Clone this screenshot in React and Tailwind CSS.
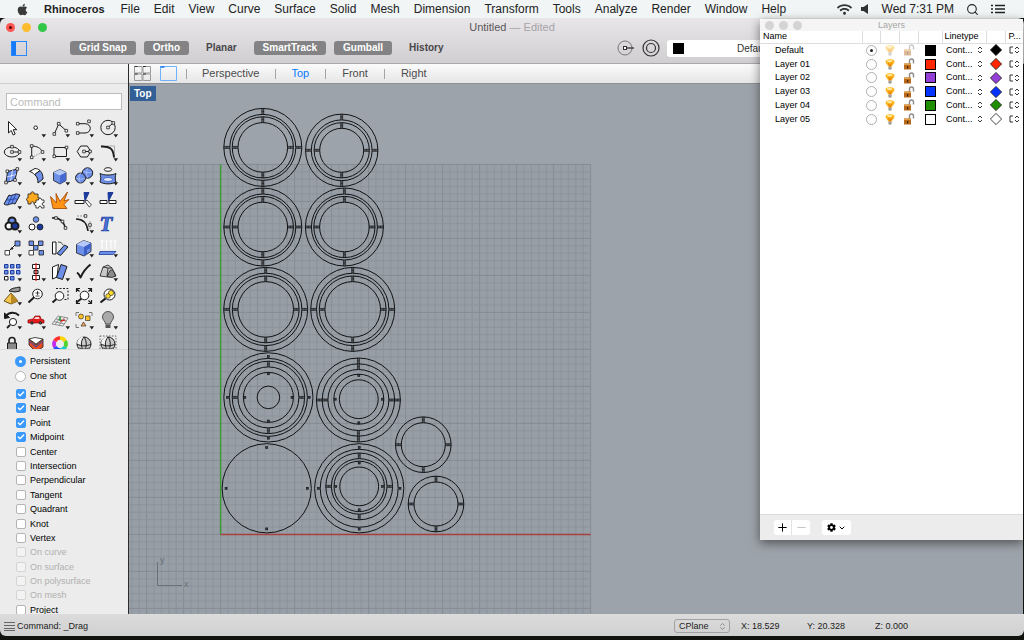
import { FaApple, FaWifi, FaCog } from 'react-icons/fa';
import { ChevronDown, ChevronsUpDown, Minus, Plus, Search, Check } from 'lucide-react';
import clsx from 'clsx';

const MENUS = ['File', 'Edit', 'View', 'Curve', 'Surface', 'Solid', 'Mesh', 'Dimension', 'Transform', 'Tools', 'Analyze', 'Render', 'Window', 'Help'];

const SNAPS = [
  { label: 'End', on: true },
  { label: 'Near', on: true },
  { label: 'Point', on: true },
  { label: 'Midpoint', on: true },
  { label: 'Center' },
  { label: 'Intersection' },
  { label: 'Perpendicular' },
  { label: 'Tangent' },
  { label: 'Quadrant' },
  { label: 'Knot' },
  { label: 'Vertex' },
  { label: 'On curve', disabled: true },
  { label: 'On surface', disabled: true },
  { label: 'On polysurface', disabled: true },
  { label: 'On mesh', disabled: true },
  { label: 'Project' },
];

const LAYERS = [
  { name: 'Default', color: '#000000', current: true },
  { name: 'Layer 01', color: '#ff2600' },
  { name: 'Layer 02', color: '#9440d8' },
  { name: 'Layer 03', color: '#0433ff' },
  { name: 'Layer 04', color: '#1f8f00' },
  { name: 'Layer 05', color: '#ffffff' },
];

/* ---------- tool palette ---------- */

const K = '#1c1c1c';
const B = '#6d8fe8';
const L = '#b5c8fa';
const N = '#1b3a9a';

// little square control point
const P = ({ x, y, f = '#fff' }) => <rect x={x - 1.3} y={y - 1.3} width="2.6" height="2.6" fill={f} stroke={K} strokeWidth=".8" />;
const Lens = ({ x = 13.5, y = 10, r = 4.8, f = '#fff' }) => (
  <>
    <path d={`M${x - r * 0.7} ${y + r * 0.7}L4.5 18.5`} strokeWidth="2" />
    <circle cx={x} cy={y} r={r} fill={f} />
  </>
);
const Sphere = () => (
  <>
    <circle cx="12" cy="12" r="7" fill="#c9c9c9" />
    <path d="M5.500 9.500C7 5 11 4.500 12 5c-2 3-2.500 5-2.500 8-2-.3-4-1-4.500-1.500z" fill="#f4f4f4" stroke="none" />
    <path d="M5 12c4 2.500 10 2.500 14 0M12 5c-3.500 4-3.500 10 0 14M12 5c3 4 3 10 0 14" />
    <path d="M7 15c4 2 7 2 10 0l-2 3.200H9z" fill="#555" stroke="none" />
  </>
);

const TOOLS = [
  ['Select', 0, <path d="M8.500 5.500v11.500l2.700-2.500 2 4.500 2-1-2-4.300h3.600z" fill="#fff" />],
  ['Point', 1, <circle cx="11.700" cy="11.700" r="1.800" fill="#fff" />],
  ['Polyline', 1, <><path d="M6.300 18L10.700 8l8 7" /><P x={6.3} y={18} /><P x={10.7} y={7.7} /><P x={18.3} y={14.7} /></>],
  ['Curve', 1, <><path d="M5.700 7.700H13c7 0 7 9.300 0 9.300H5.700" /><P x={5.7} y={7.7} /><P x={17} y={5.3} /><P x={5.7} y={17} /></>],
  ['Circle', 1, <><circle cx="12" cy="11.500" r="7.200" /><path d="M12 11.500l5-4.500" /><P x={12} y={11.5} /><P x={17.3} y={7} /></>],

  ['Ellipse', 1, <><ellipse cx="12" cy="12" rx="7.700" ry="5" /><path d="M12 12h8" /><P x={12} y={12} /><P x={19.5} y={12} /><P x={12} y={6.7} /></>],
  ['Arc', 1, <><path d="M7.700 17.500L18.700 12" stroke="#999" strokeDasharray="1.500 1" /><path d="M7.700 17V6c5 0 9 2 11 6" /><P x={7.7} y={6} /><P x={7.7} y={17.3} /><P x={18.5} y={12} /></>],
  ['Rectangle', 1, <><rect x="6" y="7.500" width="12.500" height="9" /><P x={6.3} y={16.3} /><P x={18.5} y={7.5} /></>],
  ['Polygon', 1, <><path d="M8.700 6h6.600l3.500 5.500-3.500 5.500H8.700L5.200 11.500z" /><path d="M12 11.500h6" /><P x={12} y={11.5} /><P x={18} y={11.5} /></>],
  ['Fillet', 1, <><path d="M11 6h7.500v7" stroke="#aaa" /><path d="M5 6.500c8-.5 12.500 1.500 13 11" strokeWidth="2" /></>],

  ['Surface', 1, <><path d="M7.500 7.500L17.500 5l-2.500 11-9 2.500z" fill={B} /><path d="M12.500 6l-2 11M6.700 13l9.500-2.500" stroke="#fff" strokeWidth=".7" /><P x={7.3} y={7.3} /><P x={17.3} y={5} /><P x={15} y={16} /><P x={6} y={18.5} /></>],
  ['Loft', 1, <><path d="M10.500 10.500l5.500-4c2.500 2.500 3 5 3 8.500l-5 4c0-4-1-6.500-3.500-8.500z" fill={B} /><path d="M5.500 7.500l5.500-3c2 0 3.500.8 5 2l-5.500 4C9 9 7.500 7.800 5.500 7.500z" fill="#fff" /></>],
  ['Box', 1, <><path d="M5.500 8.500l6.500-3 6 3v8l-6 3.500-6.500-3.500z" fill={B} strokeWidth=".8" /><path d="M5.500 8.500l6.500-3 6 3-6 3z" fill={L} stroke="none" /><path d="M12 11.500l6-3v8L12 20z" fill="#4668cf" stroke="none" /></>],
  ['Boolean union', 1, <><circle cx="15.500" cy="9" r="5.200" fill={B} /><circle cx="8.500" cy="14" r="5" fill={B} /><path d="M3.500 14c3 1.500 7 1.500 10 0M8.500 9c-2 3-2 7 0 10M11 7c3 2 6 2 9 1M16 4c-2 3-2 7 0 10" stroke="#dbe5ff" strokeWidth=".5" /></>],
  ['Pipe', 1, <><ellipse cx="12" cy="5.500" rx="3.700" ry="1.800" fill="#fff" /><path d="M4 9.500c4 2 12 2 16 0-1 3-1 6 0 8.500-4 2.500-12 2.500-16 0 1-3 1-5.500 0-8.500z" fill={B} /><ellipse cx="12" cy="15.500" rx="4.500" ry="2" fill="#dfe8ff" stroke={N} strokeWidth=".6" /></>],

  ['Mesh', 1, <><path d="M4 16l5-9c3 2 6-3 11 0l-5 9c-4-2-7 3-11 0z" fill={B} /><path d="M6.500 11.500c4 2 7-2.500 11 0M12.500 6.500l-4.500 10M16 5.500L11.500 16" stroke={N} strokeWidth=".8" /></>],
  ['Join', 0, <><path d="M4 6h3c-1-3 4-3 3 0h4v4c3-1 3 4 0 3v3h-4c1-3-4-3-3 0H4v-3c-2 0-2-3 0-3z" fill="#ffa91f" strokeWidth=".8" /><path d="M12 12h2.500c-.5-2.500 3.500-2.500 3 0H20v2.500c-2.500-.5-2.500 3.500 0 3V20h-2.500c.5-2.500-3.500-2.500-3 0H12v-2.500c-2.500.5-2.500-3.500 0-3z" fill="#fff" strokeWidth=".8" /></>],
  ['Explode', 0, <path d="M5 20.500L2.500 8.500l6 6.500-.5-9.500 4 8L19.500 4l-3.500 9 5-1.500-5 5 3 4z" fill="#ff9316" stroke="#9b4200" strokeWidth=".8" />],
  ['Trim', 0, <><path d="M12 4.500h5L13 13z" fill={N} stroke={N} /><path d="M3 12.500h9v3H3z" fill="#fff" /><path d="M13 13.500l2-1.500 4.500 5-2.200 2z" fill="#fff" strokeWidth=".8" /></>],
  ['Split', 0, <><path d="M12 4.500h5L12.500 13z" fill={N} stroke={N} /><path d="M4 12.500h7v3H4zM13 12.500h7v3h-7z" fill="#fff" /></>],

  ['Group', 1, <><circle cx="12" cy="9" r="3.600" fill={B} strokeWidth="2" /><circle cx="9" cy="14" r="3.500" fill="#fff" strokeWidth="2" /><circle cx="15" cy="14" r="3.500" fill={N} strokeWidth="2" /></>],
  ['Ungroup', 0, <><circle cx="12" cy="7.500" r="2.800" fill={B} strokeWidth=".8" /><circle cx="8" cy="15" r="3" fill="#fff" /><circle cx="16" cy="15" r="3" fill={N} strokeWidth=".8" /></>],
  ['Edit points', 0, <><path d="M4 6c7-1 12 3 13.500 11" strokeWidth="1.600" /><P x={8} y={6} /><P x={14.5} y={9.5} /><P x={17.5} y={16} /></>],
  ['Control points', 1, <><path d="M4 7c7 0 11 4 12 12" strokeWidth="1.600" /><path d="M5 4h8M18 9v8" stroke="#999" strokeDasharray="2 1" /><P x={13.5} y={4} /><P x={18} y={13} /></>],
  ['Text', 0, <text x="3.500" y="19" fontFamily="Liberation Serif, serif" fontSize="21" fontWeight="bold" fontStyle="italic" fill="#4b72dc" stroke={N} strokeWidth=".7">T</text>],

  ['Move', 1, <><path d="M8 16l7-7" /><path d="M15 5h5v5h-5z" fill={B} strokeWidth=".8" /><path d="M5 14.500h4.500V19H5z" fill="#fff" strokeWidth=".8" /><circle cx="12" cy="12.500" r=".8" fill={K} /></>],
  ['Copy', 0, <><path d="M5 5h4.500v4.500H5zM14.500 5H19v4.500h-4.500zM9.500 9.500H14V14H9.500zM15 14.500h4.500V19H15z" fill={B} strokeWidth=".8" /><path d="M5 14.500h4.500V19H5z" fill="#fff" strokeWidth=".8" /></>],
  ['Rotate', 0, <><path d="M4.500 6H8v12H4.500z" fill="#fff" /><path d="M9 17.500l7.500-8.500 3.500 2-7.500 8.500z" fill={B} /><path d="M10 6c3 0 4 1 5 3" strokeWidth=".8" /></>],
  ['Chamfer', 1, <><path d="M4.500 8.500l7-4 7.500 2.500v8.500l-7 4.500-7.500-3z" fill={B} strokeWidth=".8" /><path d="M4.500 8.500l7-4L19 7l-7 4z" fill={L} stroke="none" /><path d="M12 11l7-4v5l-4 1.500V18l-3 2z" fill="#3d5fc6" stroke="none" /></>],
  ['Extrude', 1, <><path d="M6 13V5M10.500 13V5M15 13V5M19 13V5M5 6l1-2 1 2M9.500 6l1-2 1 2M14 6l1-2 1 2M18 6l1-2 1 2" stroke="#fff" /><path d="M4 15.500h16l-3 3H3z" fill={B} stroke={N} strokeWidth=".8" /></>],

  ['Array', 1, <><path d="M4.500 4.500H8V8H4.500zM10.500 4.500H14V8h-3.500zM16.500 4.500H20V8h-3.500zM4.500 10.500H8V14H4.500zM10.500 10.500H14V14h-3.500zM16.500 10.500H20V14h-3.500zM10.500 16.500H14V20h-3.500z" fill={B} stroke={N} /><path d="M4.500 16.500H8V20H4.500z" fill="#fff" /></>],
  ['Align', 1, <><path d="M8.500 4.500h7v4h-7zM8.500 15.500h7v4h-7z" fill="#fff" /><path d="M10 10.500h4v3h-4z" fill="#bbb" /><path d="M12 3v18" stroke="#e01b1b" strokeWidth="1.200" /></>],
  ['Flow', 1, <><path d="M4.500 7l6-2.500L9 17l-4.500 2z" fill="#fff" /><path d="M13 4.500l6 2-4.500 13-6-2z" fill={B} /></>],
  ['Check', 1, <path d="M5 12.500c1.500 1 2.500 2.500 3.500 5C11 12 14 8 18.500 4.500" strokeWidth="2" />],
  ['Solids', 1, <><path d="M4 16l3-9 5-2 4 3 4 8-8 1z" fill="#c9c9c9" strokeWidth=".8" /><path d="M7 7l5 1-1 8M12 8l4 0" strokeWidth=".8" /><path d="M11 16.500l3-6c2-1.500 4 .5 5.500 5.500l-3.500 1.500z" fill="#8c8c8c" strokeWidth=".8" /></>],

  ['Cap', 1, <><path d="M4 17l7-8 7 8-7 3z" fill="#f4c64f" stroke="#6b5414" /><path d="M11 9v11l7-3z" fill="#b98a24" stroke="none" /><path d="M9 7c2-3 6-3 11-4v4l-5 1z" fill="#999" /></>],
  ['Zoom', 0, <><Lens /><path d="M11.500 9h4M13.500 7v4M11.500 12h4" strokeWidth=".8" /></>],
  ['Zoom window', 0, <><path d="M8 4.500h12v11h-4" strokeDasharray="2 1.500" /><Lens x={11.5} y={12} r={4.3} /></>],
  ['Zoom extents', 0, <><Lens x={12.5} y={11.5} r={4.3} /><path d="M4.500 8V4.500H8M16 4.500h3.500V8M19.500 16v3.500H16M4.500 16v3.500H8M4.500 4.500l3 3M19.500 4.500l-3 3M19.500 19.500l-3-3" strokeWidth="1.200" /></>],
  ['Zoom selected', 0, <><Lens x={13.5} y={10.5} r={5.5} /><circle cx="15" cy="9" r="2.600" fill="#ffde2b" strokeWidth=".6" /><circle cx="12" cy="12" r="2.300" fill="#ffde2b" strokeWidth=".6" /></>],

  ['Undo view', 1, <><path d="M6 8c3-4 9-4.500 13-.5" strokeWidth="1.800" /><path d="M4.500 5v5.500l5-1z" fill={K} /><circle cx="13" cy="14" r="3.600" fill="#fff" /><path d="M10 17l-3 3" strokeWidth="1.800" /></>],
  ['Named view', 1, <><path d="M4 12l5-1 2-3h5l1 3 3 1v3H4z" fill="#e31d1d" stroke="#8d0b0b" strokeWidth=".7" /><path d="M10 11l1.500-2H15l.5 2z" fill="#f7d6d6" stroke="none" /><circle cx="8" cy="15" r="1.300" fill="#555" strokeWidth=".7" /><circle cx="16.500" cy="15" r="1.300" fill="#555" strokeWidth=".7" /></>],
  ['CPlane', 1, <><path d="M4 16l6-8 10 2-5 8zM6 13.500l10.500 2.500M8 11l10.500 2M13 8.500l-6 8M16.500 9.500L11 17.500" stroke="#777" strokeWidth=".8" /><path d="M12 13l5-1" stroke="#d22" strokeWidth="1.500" /><path d="M12 13V9" stroke="#1a9b3a" strokeWidth="1.500" /></>],
  ['Selection filter', 1, <><path d="M4 8V4.500h3M17 4.500h3V8M4 16v3.500h3" stroke="#777" /><circle cx="9" cy="8.500" r="2.500" fill="#ffc12b" strokeWidth=".6" /><path d="M13.500 8H18v4.500h-4.500z" fill="#ffc12b" strokeWidth=".6" /><path d="M9 18l2.500-4 2.500 4z" fill="#f7a35c" strokeWidth=".6" /></>],
  ['Lights', 1, <><path d="M9.500 16c0-3-3-3.500-3-7a5.500 5.500 0 0111 0c0 3.500-3 4-3 7z" fill="#a9a9a9" stroke="#555" /><path d="M9.500 16.500h5V20h-5z" fill="#555" stroke="none" /></>],

  ['Lock', 0, <><path d="M9 11V8.500a3 3 0 016 0V11" strokeWidth="1.600" /><path d="M7.500 11h9v8h-9z" fill="#8a8a8a" /></>],
  ['Layers', 0, <><path d="M5 7l7 6 7-6v8l-7 5-7-7z" fill="#e94b23" strokeWidth=".8" /><path d="M5 7l6-1.500L19 7l-7 5z" fill="#fff" strokeWidth=".8" /><path d="M5 9l7 6 7-6" stroke="#2348b8" /></>],
  ['Color', 0, (
    <g strokeWidth="3.600">
      <path d="M12 6a6 6 0 015.200 3" stroke="#ffd400" /><path d="M17.200 9a6 6 0 010 6" stroke="#4fd22a" /><path d="M17.200 15a6 6 0 01-5.200 3" stroke="#12c9c9" />
      <path d="M12 18a6 6 0 01-5.200-3" stroke="#234bff" /><path d="M6.800 15a6 6 0 010-6" stroke="#c427ee" /><path d="M6.800 9A6 6 0 0112 6" stroke="#ff2e2e" />
    </g>
  )],
  ['Shade', 0, <Sphere />],
  ['Shade selected', 0, <><path d="M4 4h16v16H4z" stroke="#666" strokeDasharray="1.500 1.500" /><Sphere /></>],
];

function Tool({ label, menu, children }) {
  return (
    <button type="button" aria-label={label} className="size-6">
      <svg viewBox="0 0 24 24" className="size-6" fill="none" stroke={K} strokeWidth="1" strokeLinejoin="round">
        {children}
        {menu === 1 && <path d="M17.500 18.300h4.600l-2.300 3.200z" fill="#222" stroke="none" />}
      </svg>
    </button>
  );
}

/* ---------- drawing ---------- */

// rings: radii; bars: [outer, inner] tabs at the quadrants; dots: radii of the pin holes
const PARTS = [
  { x: 262.8, y: 147.4, rings: [39, 33, 30.6, 24.8], bars: [[39, 33], [30.6, 24.8]] },
  { x: 341.7, y: 150.3, rings: [36.2, 30.4, 27.6, 22], bars: [[36.2, 30.4], [27.6, 22]] },
  { x: 262.8, y: 227, rings: [39, 33, 30.6, 24.8], bars: [[39, 33], [30.6, 24.8]] },
  { x: 344.4, y: 227, rings: [39, 33, 30.6, 24.8], bars: [[39, 33], [30.6, 24.8]] },
  { x: 265.7, y: 309.4, rings: [42, 36.2, 33.4, 27.8], bars: [[42, 36.2], [33.4, 27.8]] },
  { x: 352.7, y: 309.4, rings: [42, 36.2, 33.4, 27.8], bars: [[42, 36.2], [33.4, 27.8]] },
  { x: 268.4, y: 397.4, rings: [44.6, 39, 36.2, 30.5, 25, 11.3], bars: [[36.2, 30.5]], dots: [40.8, 23.6] },
  { x: 358.4, y: 400, rings: [42, 36.2, 30.5], bars: [[42, 36.2], [36.2, 30.5]] },
  { x: 358.8, y: 399.2, rings: [25, 19.4], dots: [23.6] },
  { x: 266.7, y: 488.3, rings: [44.6], dots: [40.6] },
  { x: 359.2, y: 488.3, rings: [44.6, 39], dots: [40.8] },
  { x: 359.2, y: 486.4, rings: [33.4, 27.8, 25.2, 19.4], bars: [[33.4, 27.8]], dots: [23.4] },
  { x: 423.3, y: 444.7, rings: [27.8, 22], bars: [[27.8, 22]] },
  { x: 436, y: 504, rings: [27.8, 22], bars: [[27.8, 22]] },
];

const STEP = 7.4;
const X0 = 220.6;
const Y0 = 534.4;
const COLS = Array.from({ length: 63 }, (_, i) => i - 12);
const ROWS = Array.from({ length: 62 }, (_, i) => i - 50);

function Part({ x, y, rings, bars = [], dots = [] }) {
  return (
    <g transform={`translate(${x} ${y})`}>
      {rings.map((r) => <circle key={r} r={r} />)}
      {[0, 90, 180, 270].map((a) => (
        <g key={a} transform={`rotate(${a})`}>
          {bars.map(([o, i]) => (
            <g key={o}>
              <rect x={i} y="-1.1" width={o - i} height="2.2" fill="#1b1d20" fillOpacity=".5" stroke="none" />
              <path d={`M${i} -1H${o}M${i} 1H${o}M${(i + o) / 2} -1V1`} strokeWidth=".6" />
            </g>
          ))}
          {dots.map((r) => <rect key={r} x={r - 1} y="-1" width="2" height="2" fill="#3b3e42" strokeWidth=".6" />)}
        </g>
      ))}
    </g>
  );
}

function Drawing() {
  return (
    <svg className="block size-full" role="img" aria-label="Top view drawing">
      <g transform="translate(-129 -84)" fill="none">
        <rect x="129" y="164.400" width="461.600" height="800" fill="#979ea6" />
        {COLS.map((i) => (
          <path key={i} d={`M${X0 + i * STEP} 164.400V900`} stroke={i % 5 ? '#8b929b' : '#838a93'} strokeWidth=".9" />
        ))}
        {ROWS.map((i) => (
          <path key={i} d={`M129 ${Y0 + i * STEP}H590.600`} stroke={i % 5 ? '#8b929b' : '#838a93'} strokeWidth=".9" />
        ))}
        <path d={`M${X0} 164.400V${Y0}`} stroke="#3f9a35" strokeWidth="1.500" />
        <path d={`M${X0} ${Y0}H590.600`} stroke="#a8403f" strokeWidth="1.500" />
        <g stroke="#101214" strokeWidth="1">
          {PARTS.map((p, i) => <Part key={i} {...p} />)}
        </g>
        <path d="M157.500 562v23.500H182" stroke="#6b7076" />
        <g fill="#686d73" className="text-[9px]">
          <text x="160" y="563">y</text>
          <text x="184" y="587">x</text>
        </g>
      </g>
    </svg>
  );
}

/* ---------- chrome ---------- */

function MenuBar() {
  return (
    <header className="flex h-[18px] shrink-0 items-center bg-[#f1f5f6] pr-[18px] pl-4 text-[12px] text-[#222]">
      <FaApple size={13} className="text-[#3a3a3a]" />
      <button type="button" className="ml-[15px] text-[11px] font-bold">Rhinoceros</button>
      <nav className="ml-4 flex gap-3.5">
        {MENUS.map((m) => <button type="button" key={m}>{m}</button>)}
      </nav>
      <div className="ml-auto flex items-center">
        <FaWifi size={15} className="text-[#333]" />
        <svg viewBox="0 0 10 12" className="ml-2 h-3 w-2.5" fill="#333"><path d="M1 4h2.500L8 1v10L3.500 8H1z" /></svg>
        <span className="ml-3 whitespace-nowrap">Wed 7:31 PM</span>
        <Search size={13} strokeWidth={2} className="ml-3" />
        <svg viewBox="0 0 15 10" className="ml-3 h-2.5 w-[15px]" stroke="#222" strokeWidth="1.500"><path d="M0 1.500h2M4 1.500h10M0 5h2M4 5h10M0 8.500h2M4 8.500h10" /></svg>
      </div>
    </header>
  );
}

function Toggle({ children, on }) {
  return (
    <button type="button" aria-pressed={!!on} className={clsx('h-3.5 rounded-[3px] px-[9px] text-[10px] leading-[14px] font-bold', on ? 'bg-[#838284] text-white' : 'text-[#48464a]')}>
      {children}
    </button>
  );
}

function Toolbar() {
  return (
    <div className="h-[46px] shrink-0 rounded-t-md border-b border-[#aaa8aa] bg-linear-to-b from-[#e9e6e9] to-[#d0ced0]">
      <div className="grid h-[19px] grid-cols-3 items-center px-1.5">
        <div className="flex gap-[7px]">
          <span className="grid size-[9px] place-items-center rounded-full bg-[#fc5753]"><i className="size-[3px] rounded-full bg-[#5a0000]" /></span>
          <span className="size-[9px] rounded-full bg-[#fdbc2e]" />
          <span className="size-[9px] rounded-full bg-[#33c748]" />
        </div>
        <h1 className="text-center text-[11px] whitespace-nowrap text-[#59575a]">Untitled <span className="text-[#a5a3a6]">— Edited</span></h1>
      </div>
      <div className="flex h-[22px] items-center">
        <button type="button" aria-label="Toggle sidebar" className="ml-[11px] flex h-[15px] w-4 border border-[#2688fb]"><span className="h-full w-1 bg-[#1679f5]" /></button>
        <div className="ml-[43px] flex items-center gap-2">
          <Toggle on>Grid Snap</Toggle>
          <Toggle on>Ortho</Toggle>
          <Toggle>Planar</Toggle>
          <Toggle on>SmartTrack</Toggle>
          <Toggle on>Gumball</Toggle>
          <Toggle>History</Toggle>
        </div>
        <div className="mr-[184px] ml-auto flex items-center gap-[7px]">
          <svg viewBox="0 0 18 18" className="size-[18px]" fill="none" stroke="#333"><circle cx="8" cy="9" r="7" stroke="#777" /><path d="M9 9h8" strokeWidth="1.300" /><rect x="6.500" y="7.500" width="3" height="3" fill="#fff" /></svg>
          <svg viewBox="0 0 18 18" className="size-[18px]" fill="none" stroke="#333" strokeWidth="1.200"><circle cx="9" cy="9" r="8" /><circle cx="9" cy="9" r="4.500" /></svg>
          <label className="flex h-[17px] w-[173px] items-center rounded-[3px] bg-white px-1.5">
            <span className="size-[11px] bg-black" />
            <select aria-label="Current layer" className="ml-[53px] appearance-none text-[10px] text-[#333]"><option>Default</option></select>
          </label>
        </div>
      </div>
    </div>
  );
}

function Snap({ label, on, disabled }) {
  return (
    <label className={clsx('flex items-center gap-1', disabled && 'text-[#b0b0b0]')}>
      <span className="grid size-2.5">
        <input
          type="checkbox"
          defaultChecked={on}
          disabled={disabled}
          className={clsx('col-start-1 row-start-1 size-2.5 appearance-none rounded-xs border checked:border-[#3b99fc] checked:bg-[#3b99fc]', disabled ? 'border-[#d4d4d4] bg-[#f3f3f3]' : 'border-[#b4b4b4] bg-white')}
        />
        {on && <Check size={8} strokeWidth={4} className="pointer-events-none col-start-1 row-start-1 place-self-center text-white" />}
      </span>
      {label}
    </label>
  );
}

function Sidebar() {
  return (
    <aside className="flex w-[129px] shrink-0 flex-col border-r border-[#2b2b2b] bg-[#ececec] text-[9px] leading-3 text-black">
      <div className="h-5 shrink-0 border-b border-[#cfcfcf] bg-linear-to-b from-[#f8f8f8] to-[#ececec]" />
      <div className="shrink-0 px-1.5 pt-[9px] pb-1.5">
        <input aria-label="Command" placeholder="Command" className="block h-[17px] w-full border border-[#bdbdbd] bg-white px-[3px] text-[11px] placeholder:text-[#bcbcbc]" />
      </div>
      <div className="grid h-[233px] shrink-0 auto-rows-[24px] grid-cols-[repeat(5,24px)] overflow-hidden">
        {TOOLS.map(([label, menu, art]) => <Tool key={label} label={label} menu={menu}>{art}</Tool>)}
      </div>
      <div className="flex min-h-0 flex-1 flex-col border-t border-[#dcdcdc] pt-[5px] pl-4">
        <div className="flex flex-col gap-[3px]">
          {['Persistent', 'One shot'].map((m, i) => (
            <label key={m} className="flex items-center gap-1">
              <input type="radio" name="mode" defaultChecked={i === 0} className="-ml-px size-[11px] appearance-none rounded-full border border-[#b4b4b4] bg-white checked:border-4 checked:border-[#3b99fc]" />
              {m}
            </label>
          ))}
        </div>
        <div className="mt-1.5 -mb-0.5 flex min-h-0 flex-1 flex-col justify-between">
          {SNAPS.map((s) => <Snap key={s.label} {...s} />)}
        </div>
      </div>
    </aside>
  );
}

function ViewTabs() {
  return (
    <div className="flex h-5 shrink-0 items-center border-b border-[#8d9094] bg-linear-to-b from-[#fbfbfb] to-[#e6e6e6] pl-[5px] text-[11px] text-[#4c4c4c]">
      <button type="button" aria-label="Four views">
        <svg viewBox="0 0 18 16" className="h-4 w-[18px]" fill="none" stroke="#9a9a9a"><path d="M.5.500h7.500v6.500H.5zM9 .500h7.500v6.500H9zM.5 8h7.500v6.500H.5zM9 8h7.500v6.500H9z" /><path d="M.5.500h3M9 .500h3M.5 8h3M9 8h3" stroke="#333" /></svg>
      </button>
      <button type="button" aria-label="Single view" className="ml-2">
        <svg viewBox="0 0 17 16" className="h-4 w-[17px]" fill="none" stroke="#6fb2fb"><path d="M.5.500h16v14H.5z" /><path d="M.5 1h4" stroke="#1679f5" strokeWidth="1.500" /></svg>
      </button>
      <span className="ml-[9px] h-2.5 w-px bg-[#a5a5a5]" />
      <button type="button" className="ml-[15px]">Perspective</button>
      <span className="ml-4 h-2.5 w-px bg-[#a5a5a5]" />
      <button type="button" className="ml-[15px] text-[#0a7aff]">Top</button>
      <span className="ml-4 h-2.5 w-px bg-[#a5a5a5]" />
      <button type="button" className="ml-4">Front</button>
      <span className="ml-4 h-2.5 w-px bg-[#a5a5a5]" />
      <button type="button" className="ml-4">Right</button>
    </div>
  );
}

function StatusBar() {
  return (
    <footer className="flex h-[22px] shrink-0 items-center rounded-b-md bg-linear-to-b from-[#dcdcdc] to-[#d0d0d0] pt-0.5 pl-1 text-[9px] leading-3 text-[#1c1c1c]">
      <svg viewBox="0 0 11 9" className="h-[9px] w-[11px]" stroke="#666" strokeWidth="1"><path d="M0 .500h11M0 3.500h11M0 6.500h11M0 8.500h11" /></svg>
      <p className="ml-0.5">Command: _Drag</p>
      <div className="mr-[115px] ml-auto flex items-center">
        <label className="flex h-3.5 w-14 items-center justify-between rounded-[3px] border border-[#a2a2a2] pr-0.5 pl-1">
          <select aria-label="Coordinates" className="appearance-none"><option>CPlane</option></select>
          <ChevronsUpDown size={9} className="text-[#777]" />
        </label>
        <span className="ml-[11px] w-[66px]">X: 18.529</span>
        <span className="w-[68px]">Y: 20.328</span>
        <span className="w-[34px] whitespace-nowrap">Z: 0.000</span>
      </div>
    </footer>
  );
}

/* ---------- layers panel ---------- */

const Bulb = () => (
  <svg viewBox="0 0 12 12" className="mx-auto size-3">
    <path d="M4 8.500C4 6.500 1.500 6 1.500 3.600 1.500 0 10.500 0 10.500 3.600 10.500 6 8 6.500 8 8.500z" fill="#ffb41e" />
    <ellipse cx="5.500" cy="2.800" rx="2.800" ry="1.400" fill="#ffe694" />
    <path d="M4.500 5l1.500 3.500L7.500 5" fill="none" stroke="#e87800" />
    <path d="M4.300 8.500h3.400V11L6 12l-1.700-1z" fill="#a5a19a" />
  </svg>
);

const Padlock = () => (
  <svg viewBox="0 0 12 12" className="mx-auto size-3">
    <path d="M6.500 6V3a2 2 0 014 0v2.500" fill="none" stroke="#8a8a8a" strokeWidth="1.400" />
    <path d="M1 5.500h7V11.500H1z" fill="#b86a1c" />
    <path d="M1 5.500h7V7H1z" fill="#e0a050" />
    <path d="M4 8h1.200v2.500H4z" fill="#4a2500" />
  </svg>
);

function Layers() {
  return (
    <section aria-label="Layers" className="absolute top-px right-px bottom-[100px] flex w-[263px] flex-col bg-white text-[9px] leading-none text-black shadow-[0_3px_10px_rgba(0,0,0,0.5)]">
      <div className="grid h-3 shrink-0 grid-cols-3 items-center rounded-t-sm bg-[#f5f5f5] px-[5px]">
        <div className="flex gap-[5px]">
          {[0, 1, 2].map((i) => <span key={i} className="size-[9px] rounded-full bg-[#d4d4d4]" />)}
        </div>
        <h2 className="text-center text-[9px] text-[#a5a5a5]">Layers</h2>
      </div>
      <table className="h-[95px] w-full table-fixed border-collapse">
        <colgroup>
          <col /><col className="w-[18px]" /><col className="w-[19px]" /><col className="w-[19px]" /><col className="w-6" /><col className="w-11" /><col className="w-[19px]" /><col className="w-[18px]" />
        </colgroup>
        <thead>
          <tr className="h-3 text-left *:border-r *:border-b *:border-[#dedede] *:p-0 *:font-normal">
            <th className="!pl-[3px]">Name</th>
            <th aria-label="Current" /><th aria-label="Visible" /><th aria-label="Locked" /><th aria-label="Color" />
            <th className="!pl-0.5">Linetype</th>
            <th aria-label="Print color" />
            <th className="!border-r-0 !pl-[3px]">P...</th>
          </tr>
        </thead>
        <tbody>
          {LAYERS.map((l) => (
            <tr key={l.name} className="*:p-0">
              <td className="!pl-[15px]">{l.name}</td>
              <td>
                <span className="mx-auto grid size-[11px]">
                  <input type="radio" name="current" aria-label={`Make ${l.name} current`} defaultChecked={l.current} className="col-start-1 row-start-1 size-[11px] appearance-none rounded-full border border-[#b0b0b0] bg-white" />
                  {l.current && <i className="pointer-events-none col-start-1 row-start-1 size-[3px] place-self-center rounded-full bg-[#222]" />}
                </span>
              </td>
              <td className={clsx(l.current && 'opacity-45')}><Bulb /></td>
              <td className={clsx(l.current && 'opacity-45')}><Padlock /></td>
              <td><span className="mx-auto block size-[11px] border border-black" style={{ background: l.color }} /></td>
              <td>
                <label className="flex items-center pl-1">
                  <select aria-label={`${l.name} linetype`} className="w-[31px] appearance-none"><option>Cont...</option></select>
                  <svg viewBox="0 0 6 8" className="h-2 w-1.5" fill="none" stroke="#333"><path d="M1 3l2-2 2 2M1 5l2 2 2-2" /></svg>
                </label>
              </td>
              <td>
                <svg viewBox="0 0 12 12" className="mx-auto size-3"><path d="M6 .400L11.600 6 6 11.600.400 6z" fill={l.color} stroke="#111" strokeWidth=".8" /></svg>
              </td>
              <td>
                <svg viewBox="0 0 12 8" className="ml-1 h-2 w-3" fill="none" stroke="#333"><path d="M4 1H1v6h3M6 3l2-2 2 2M6 5l2 2 2-2" /></svg>
              </td>
            </tr>
          ))}
        </tbody>
      </table>
      <div className="mt-auto flex h-[26px] shrink-0 items-center border-t border-[#dcdcdc] bg-[#ececec] pl-3.5">
        <button type="button" aria-label="Add layer" className="grid h-[15px] w-[18px] place-items-center rounded-l-[3px] border-r border-[#e4e4e4] bg-white"><Plus size={13} strokeWidth={1.8} /></button>
        <button type="button" aria-label="Remove layer" className="grid h-[15px] w-[18px] place-items-center rounded-r-[3px] bg-white"><Minus size={13} strokeWidth={1.8} className="text-[#c4c4c4]" /></button>
        <button type="button" aria-label="Layer actions" className="ml-3 flex h-[15px] w-[29px] items-center justify-between rounded-[3px] bg-white px-[5px]"><FaCog size={9} /><ChevronDown size={8} strokeWidth={3} /></button>
      </div>
    </section>
  );
}

export default function App() {
  return (
    <div className="flex h-screen flex-col overflow-hidden bg-[#11140e] font-['Liberation_Sans',Arial,sans-serif]">
      <MenuBar />
      <div className="relative flex min-h-0 flex-1 flex-col pb-1">
        <Toolbar />
        <main className="mr-px flex min-h-0 flex-1">
          <Sidebar />
          <div className="flex min-w-0 flex-1 flex-col">
            <ViewTabs />
            <div className="relative min-h-0 flex-1 overflow-hidden bg-[#9da3aa]">
              <div className="absolute inset-0"><Drawing /></div>
              <span className="absolute top-0.5 left-px bg-[#315f96] px-1 text-[10px] leading-[15px] font-bold text-white">Top</span>
            </div>
          </div>
        </main>
        <StatusBar />
        <Layers />
      </div>
    </div>
  );
}
